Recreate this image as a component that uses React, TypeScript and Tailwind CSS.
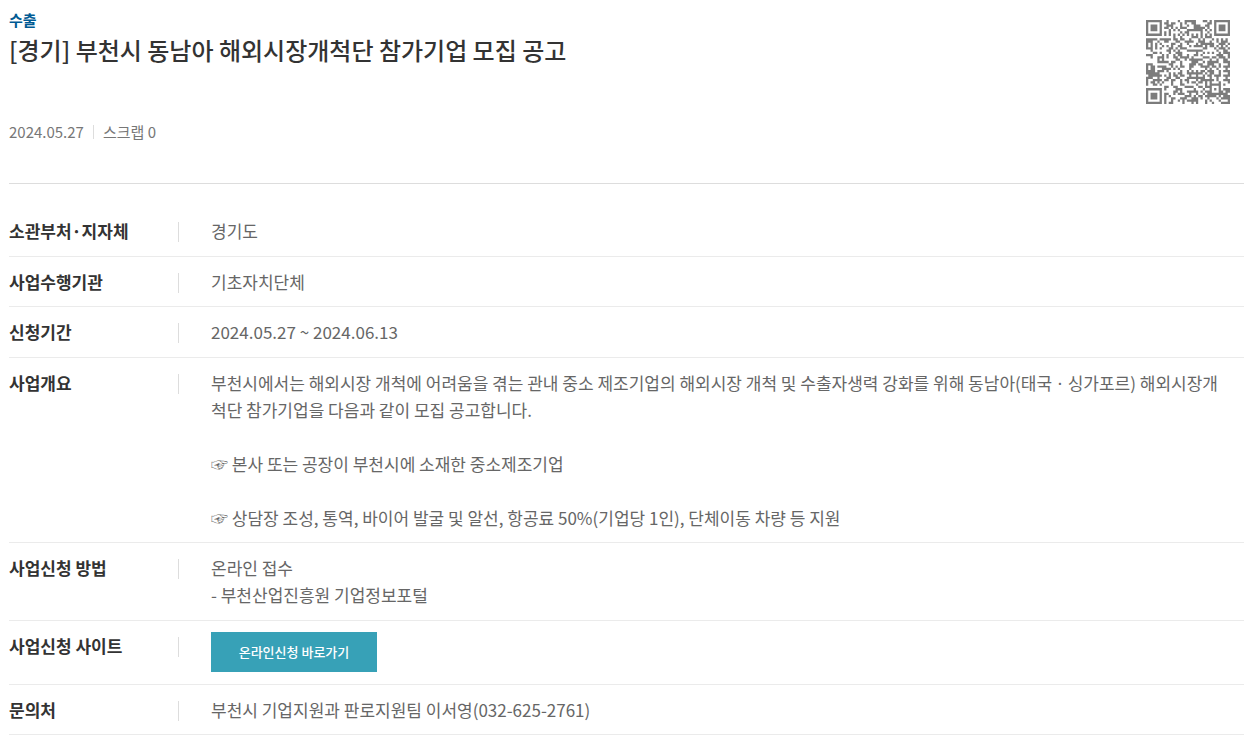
import type { ReactNode } from "react";

const QR_SIZE = 37;
const DATA_CODEWORDS = 108;
const EC_CODEWORDS = 26;
const MASK = 2;

function gfMultiply(a: number, b: number): number {
  let result = 0;
  for (let i = 7; i >= 0; i--) {
    result = (result << 1) ^ ((result >>> 7) * 0x11d);
    result ^= ((b >>> i) & 1) * a;
  }
  return result;
}

function errorCorrection(data: number[]): number[] {
  const divisor: number[] = new Array(EC_CODEWORDS).fill(0);
  divisor[EC_CODEWORDS - 1] = 1;
  let root = 1;
  for (let i = 0; i < EC_CODEWORDS; i++) {
    for (let j = 0; j < EC_CODEWORDS; j++) {
      divisor[j] = gfMultiply(divisor[j], root);
      if (j + 1 < EC_CODEWORDS) divisor[j] ^= divisor[j + 1];
    }
    root = gfMultiply(root, 2);
  }
  const remainder: number[] = new Array(EC_CODEWORDS).fill(0);
  for (const byte of data) {
    const factor = byte ^ (remainder.shift() as number);
    remainder.push(0);
    divisor.forEach((c, i) => {
      remainder[i] ^= gfMultiply(c, factor);
    });
  }
  return remainder;
}

function encode(text: string): number[] {
  const bits: number[] = [];
  const push = (value: number, length: number) => {
    for (let i = length - 1; i >= 0; i--) bits.push((value >>> i) & 1);
  };
  push(4, 4);
  push(text.length, 8);
  for (const ch of text) push(ch.charCodeAt(0), 8);
  push(0, 4);
  while (bits.length % 8) bits.push(0);
  const data: number[] = [];
  for (let i = 0; i < bits.length; i += 8) data.push(parseInt(bits.slice(i, i + 8).join(""), 2));
  for (let pad = 0xec; data.length < DATA_CODEWORDS; pad ^= 0xec ^ 0x11) data.push(pad);
  return [...data, ...errorCorrection(data)];
}

// Version 5-L symbol, mask pattern 2 (every third column inverted).
function build(codewords: number[]): boolean[][] {
  const grid: boolean[][] = Array.from({ length: QR_SIZE }, () => new Array(QR_SIZE).fill(false));
  const fixed: boolean[][] = Array.from({ length: QR_SIZE }, () => new Array(QR_SIZE).fill(false));
  const set = (x: number, y: number, dark: boolean) => {
    if (x < 0 || y < 0 || x >= QR_SIZE || y >= QR_SIZE) return;
    grid[y][x] = dark;
    fixed[y][x] = true;
  };
  for (let i = 0; i < QR_SIZE; i++) {
    set(6, i, i % 2 === 0);
    set(i, 6, i % 2 === 0);
  }
  for (const [cx, cy] of [[3, 3], [QR_SIZE - 4, 3], [3, QR_SIZE - 4]]) {
    for (let dy = -4; dy <= 4; dy++)
      for (let dx = -4; dx <= 4; dx++) {
        const d = Math.max(Math.abs(dx), Math.abs(dy));
        set(cx + dx, cy + dy, d !== 2 && d !== 4);
      }
  }
  for (let dy = -2; dy <= 2; dy++)
    for (let dx = -2; dx <= 2; dx++)
      set(30 + dx, 30 + dy, Math.max(Math.abs(dx), Math.abs(dy)) !== 1);

  const info = 8 | MASK;
  let rem = info;
  for (let i = 0; i < 10; i++) rem = (rem << 1) ^ ((rem >>> 9) * 0x537);
  const format = ((info << 10) | rem) ^ 0x5412;
  const bit = (i: number) => ((format >>> i) & 1) === 1;
  for (let i = 0; i <= 5; i++) set(8, i, bit(i));
  set(8, 7, bit(6));
  set(8, 8, bit(7));
  set(7, 8, bit(8));
  for (let i = 9; i < 15; i++) set(14 - i, 8, bit(i));
  for (let i = 0; i < 8; i++) set(QR_SIZE - 1 - i, 8, bit(i));
  for (let i = 8; i < 15; i++) set(8, QR_SIZE - 15 + i, bit(i));
  set(8, QR_SIZE - 8, true);

  let index = 0;
  for (let right = QR_SIZE - 1; right >= 1; right -= 2) {
    if (right === 6) right = 5;
    for (let v = 0; v < QR_SIZE; v++)
      for (let j = 0; j < 2; j++) {
        const x = right - j;
        const upward = ((right + 1) & 2) === 0;
        const y = upward ? QR_SIZE - 1 - v : v;
        if (fixed[y][x]) continue;
        const dark = index < codewords.length * 8 && ((codewords[index >> 3] >>> (7 - (index & 7))) & 1) === 1;
        grid[y][x] = dark !== (x % 3 === 0);
        index++;
      }
  }
  return grid;
}

function QrCode({ value }: { value: string }) {
  const path = build(encode(value))
    .map((row, y) => row.map((dark, x) => (dark ? `M${x} ${y}h1v1h-1z` : "")).join(""))
    .join("");
  return (
    <svg viewBox={`0 0 ${QR_SIZE} ${QR_SIZE}`} className="size-21 shrink-0 text-[#7c7c7c]" role="img" aria-label="QR 코드">
      <path d={path} fill="currentColor" />
    </svg>
  );
}

function Row({ label, roomy = false, children }: { label: string; roomy?: boolean; children: ReactNode }) {
  return (
    <div className={`flex border-b border-[#ebebeb] pt-[11px] ${roomy ? "pb-3" : "pb-[11px]"}`}>
      <dt className="flex w-[170px] shrink-0 justify-between font-bold text-[#333]">
        {label}
        <span className="mt-[5px] h-5 w-px bg-[#ddd]" />
      </dt>
      <dd className="min-w-0 flex-1 pr-3 pl-8 text-[#666]">{children}</dd>
    </div>
  );
}

export default function App() {
  return (
    <main className="bg-white pr-1.5 pl-[9px] font-['Noto_Sans_CJK_KR',sans-serif] text-[17px] leading-[27px]">
      <header className="flex justify-between border-b border-[#ddd] pb-[39px]">
        <div>
          <p className="pt-2 text-[15px] leading-6 font-bold text-[#005a93]">수출</p>
          <h1 className="text-2xl leading-9 font-medium text-[#333]">
            [경기] 부천시 동남아 해외시장개척단 참가기업 모집 공고
          </h1>
          <div className="mt-13 flex items-center text-[15px] leading-6 text-[#777]">
            <span>2024.05.27</span>
            <span className="mx-[9px] h-3.5 w-px bg-[#ddd]" />
            <span>스크랩 0</span>
          </div>
        </div>
        <div className="pt-5 pr-3.5">
          <QrCode value="https://www.bizinfo.go.kr/web/lay1/bbs/S1T122C128/AS/74/view.do?pblancId=PBLN_000000000097818" />
        </div>
      </header>

      <dl className="pt-[22px]">
        <Row label="소관부처·지자체" roomy>경기도</Row>
        <Row label="사업수행기관">기초자치단체</Row>
        <Row label="신청기간" roomy>2024.05.27 ~ 2024.06.13</Row>
        <Row label="사업개요">
          <p>
            부천시에서는 해외시장 개척에 어려움을 겪는 관내 중소 제조기업의 해외시장 개척 및 수출자생력 강화를 위해
            동남아(태국ㆍ싱가포르) 해외시장개척단 참가기업을 다음과 같이 모집 공고합니다.
          </p>
          <p className="mt-[27px]">☞ 본사 또는 공장이 부천시에 소재한 중소제조기업</p>
          <p className="mt-[27px]">☞ 상담장 조성, 통역, 바이어 발굴 및 알선, 항공료 50%(기업당 1인), 단체이동 차량 등 지원</p>
        </Row>
        <Row label="사업신청 방법" roomy>
          <p>온라인 접수</p>
          <p>- 부천산업진흥원 기업정보포털</p>
        </Row>
        <Row label="사업신청 사이트" roomy>
          <a href="#apply" className="flex h-10 w-[166px] items-center justify-center bg-[#37a1b7] pb-0.5 text-[13px] font-medium text-white">
            온라인신청 바로가기
          </a>
        </Row>
        <Row label="문의처">부천시 기업지원과 판로지원팀 이서영(032-625-2761)</Row>
      </dl>
    </main>
  );
}
